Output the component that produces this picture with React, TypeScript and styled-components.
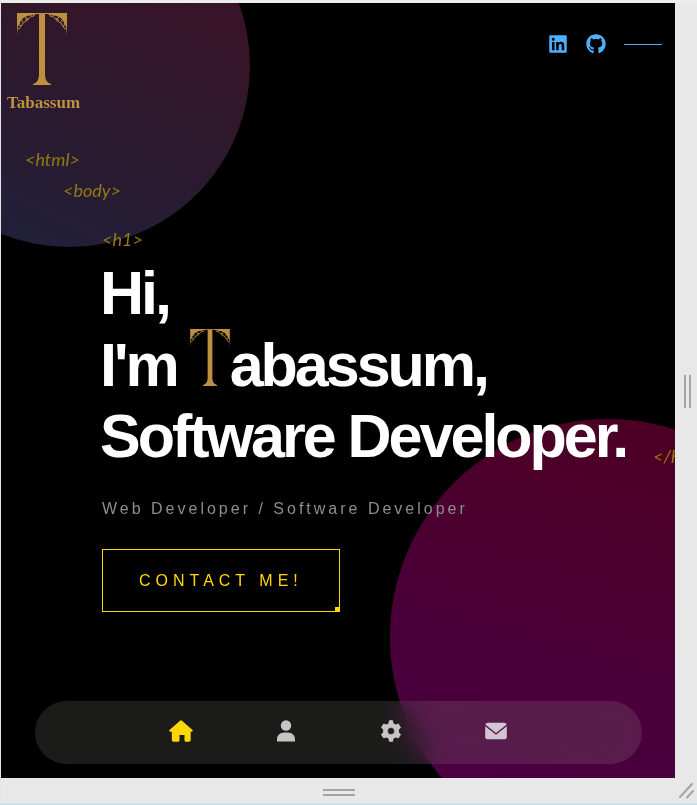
import React from "react";
import styled, { createGlobalStyle } from "styled-components";
import { FaLinkedin, FaGithub } from "react-icons/fa";

const GlobalStyle = createGlobalStyle`
  *, *::before, *::after { box-sizing: border-box; }
  body { margin: 0; background: #e8e8e8; font-family: "Liberation Sans", Arial, sans-serif; }
`;

const Frame = styled.div`
  display: grid;
  grid-template-columns: minmax(0, 1fr) 22px;
  grid-template-rows: 1fr 25px;
  min-height: 100vh;
  border-top: 3px solid #ededed;
  border-left: 1px solid #e4e6e6;
  border-bottom: 2px solid #c9e3ec;
  background: #e8e8e8;
`;

const Screen = styled.div`
  position: relative;
  isolation: isolate;
  overflow: hidden;
  display: flex;
  flex-direction: column;
  background: #000;
  color: #fff;
`;

const TopCircle = styled.div`
  position: absolute;
  z-index: -1;
  top: -118px;
  left: -113px;
  width: 362px;
  height: 362px;
  border-radius: 50%;
  background: linear-gradient(25deg, #221f38 15%, #2e182c 50%, #401024 90%);
`;

const BottomCircle = styled.div`
  position: absolute;
  z-index: -1;
  bottom: -77px;
  right: -151px;
  width: 436px;
  height: 436px;
  border-radius: 50%;
  background: linear-gradient(15deg, #4a0044 10%, #4a0036 50%, #4c0026 85%);
`;

const Header = styled.header`
  display: flex;
  justify-content: space-between;
  align-items: flex-start;
  padding: 10px 13px 0 6px;
`;

const Brand = styled.a`
  display: flex;
  flex-direction: column;
  gap: 8px;
  color: #bd9140;
  font: bold 17px/20px "Liberation Serif", serif;
  text-decoration: none;

  svg { margin-left: 10px; }
`;

const Social = styled.nav`
  display: flex;
  align-items: center;
  gap: 18px;
  padding-top: 21px;

  a { display: flex; color: #4db1ff; }
  &::after { content: ""; width: 38px; height: 1px; background: #4db1ff; }
`;

const Main = styled.main`
  padding-top: 31px;
`;

const CodeTag = styled.div<{ $indent: number; $gap?: number }>`
  margin: ${(p) => p.$gap ?? 0}px 0 0 ${(p) => p.$indent}px;
  color: #95790f;
  font: italic 18px/31px Lato, cursive;
`;

const Hero = styled.section`
  padding-left: 101px;
`;

const Title = styled.h1`
  position: relative;
  width: max-content;
  margin: 3px 0 0 -2px;
  font-size: 61px;
  line-height: 71px;
  letter-spacing: -3px;
  white-space: nowrap;

  svg { margin-left: -1px; vertical-align: baseline; }
`;

const ClosingTag = styled.span`
  position: absolute;
  left: 100%;
  bottom: 0;
  margin-left: 27px;
  color: #a5700f;
  font: italic 18px/31px Lato, cursive;
  letter-spacing: normal;
`;

const Subtitle = styled.p`
  margin: 25px 0 28px;
  color: #8d8d8d;
  font-size: 16px;
  line-height: 24px;
  letter-spacing: 3px;
`;

const ContactButton = styled.button`
  position: relative;
  padding: 0 36px;
  border: 1px solid #ffd700;
  background: transparent;
  color: #ffd700;
  font: 16px/61px "Liberation Sans", Arial, sans-serif;
  letter-spacing: 5px;
  cursor: pointer;

  &::after {
    content: "";
    position: absolute;
    right: -1px;
    bottom: -1px;
    width: 5px;
    height: 5px;
    background: #ffd700;
  }
`;

const Dock = styled.nav`
  display: flex;
  justify-content: center;
  align-items: center;
  gap: 81px;
  height: 63px;
  margin: auto 33px 14px 34px;
  padding-bottom: 4px;
  border-radius: 32px;
  background: rgba(254, 255, 240, 0.105);
  backdrop-filter: blur(15px) saturate(0.9);
`;

const DockLink = styled.a<{ $active?: boolean }>`
  display: flex;
  color: ${(p) => (p.$active ? "#ffd700" : "rgba(255, 255, 255, 0.75)")};
`;

const SideHandle = styled.div`
  display: flex;
  align-items: center;
  justify-content: center;
  gap: 3px;
  padding: 2px 0 0 2px;

  span { width: 2px; height: 33px; background: #a4a4a4; }
`;

const BottomHandle = styled.div`
  display: flex;
  flex-direction: column;
  align-items: center;
  justify-content: center;
  gap: 3px;
  padding: 3px 0 0 2px;

  span { width: 32px; height: 2px; background: #a4a4a4; }
`;

const Corner = styled.div`
  display: flex;
  align-items: center;
  justify-content: center;
`;

function OrnateT({ width, height }: { width: number; height: number }) {
  const filigree = (
    <>
      <path d="M0 0H20Q17 2 13 2.500Q7 3 4.500 7Q2 10 .8 14L.3 23L0 14Z" fill="#bd9140" />
      <g fill="none" stroke="#bd9140" strokeWidth="1">
        <path d="M18 1Q17 4 14.500 3.500Q13 2 14.500 1.500M14 3.500Q12 7 9 5.500Q7.500 3.500 9.500 3M9 6Q9 10 6 9.500Q4 8.500 5.500 7M6 10Q5 14 2.500 12.500Q1.500 11 3 10M11 5.500Q11.500 8 9 8M4 13Q3 16 1 16" />
      </g>
    </>
  );
  return (
    <svg width={width} height={height} viewBox="0 0 50 72" role="img" aria-label="T">
      <rect width="50" height="1" fill="#bd9140" />
      {filigree}
      <g transform="translate(50 0) scale(-1 1)">{filigree}</g>
      <path d="M22 .5H28V62Q28 69 34 71V72H16V71Q22 69 22 62Z" fill="#bd9140" />
    </svg>
  );
}

const HomeIcon = () => (
  <svg width="24" height="22" viewBox="0 0 24 22" fill="currentColor">
    <path d="M12 .3q.5 0 1 .5L23.500 10q.5.6.2 1.100-.3.700-1 .7h-1V20q0 1.700-1.700 1.700h-3q-1.500 0-1.500-1.500v-5.200h-5v5.200q0 1.500-1.500 1.500H4.500Q2.800 21.700 2.800 20v-8.200H1.300q-.7 0-1-.7-.3-.6.2-1.100L11 .8q.5-.5 1-.5z" />
  </svg>
);

const UserIcon = () => (
  <svg width="24" height="22" viewBox="0 0 24 22" fill="currentColor">
    <circle cx="12" cy="5.500" r="5.200" />
    <path d="M3 21.500v-1.500q0-7.500 7.500-7.500h3q7.500 0 7.500 7.500v1.500z" />
  </svg>
);

const GearIcon = () => (
  <svg width="24" height="22" viewBox="0 0 24 22" fill="currentColor">
    <path fillRule="evenodd" d="M10.400.5h3.200l.7 3.100 2.100 1.200 3-.9 2.300 3.600-2.100 2.200v2.600l2.100 2.200-2.300 3.600-3-.9-2.100 1.200-.7 3.100h-3.200l-.7-3.100-2.100-1.200-3 .9-2.300-3.600 2.100-2.200V9.700L2.300 7.500l2.300-3.600 3 .9 2.100-1.200zM12 7.500a3.500 3.500 0 1 0 0 7 3.500 3.500 0 0 0 0-7z" stroke="currentColor" strokeWidth=".5" strokeLinejoin="round" />
  </svg>
);

const MailIcon = () => (
  <svg width="24" height="22" viewBox="0 0 24 22" fill="currentColor">
    <path d="M3.700 2.700h16.600q2 0 2.400 1.900L12 13 1.300 4.600Q1.700 2.700 3.700 2.700z" />
    <path d="M1.200 6.200L12 14.700l10.800-8.500v10.500q0 2.500-2.500 2.500H3.700q-2.500 0-2.500-2.500z" />
  </svg>
);

export default function App() {
  return (
    <>
      <GlobalStyle />
      <Frame>
        <Screen>
          <TopCircle />
          <BottomCircle />
          <Header>
            <Brand href="#home">
              <OrnateT width={50} height={72} />
              Tabassum
            </Brand>
            <Social aria-label="Social">
              <a href="#linkedin" aria-label="LinkedIn"><FaLinkedin size={20} /></a>
              <a href="#github" aria-label="GitHub"><FaGithub size={20} /></a>
            </Social>
          </Header>
          <Main>
            <CodeTag $indent={24}>&lt;html&gt;</CodeTag>
            <CodeTag $indent={62}>&lt;body&gt;</CodeTag>
            <CodeTag $indent={101} $gap={18}>&lt;h1&gt;</CodeTag>
            <Hero>
              <Title>
                Hi,
                <br />
                I'm <OrnateT width={40} height={57} />abassum,
                <br />
                Software Developer.
                <ClosingTag>&lt;/h1&gt;</ClosingTag>
              </Title>
              <Subtitle>Web Developer / Software Developer</Subtitle>
              <ContactButton type="button">CONTACT ME!</ContactButton>
            </Hero>
          </Main>
          <Dock aria-label="Sections">
            <DockLink href="#home" aria-label="Home" $active><HomeIcon /></DockLink>
            <DockLink href="#about" aria-label="About"><UserIcon /></DockLink>
            <DockLink href="#services" aria-label="Services"><GearIcon /></DockLink>
            <DockLink href="#contact" aria-label="Contact"><MailIcon /></DockLink>
          </Dock>
        </Screen>
        <SideHandle><span /><span /></SideHandle>
        <BottomHandle><span /><span /></BottomHandle>
        <Corner>
          <svg width="16" height="16" viewBox="0 0 16 16" stroke="#a4a4a4" strokeWidth="2" strokeLinecap="round">
            <path d="M2 14L14 1M9 14.500L15 8" />
          </svg>
        </Corner>
      </Frame>
    </>
  );
}
